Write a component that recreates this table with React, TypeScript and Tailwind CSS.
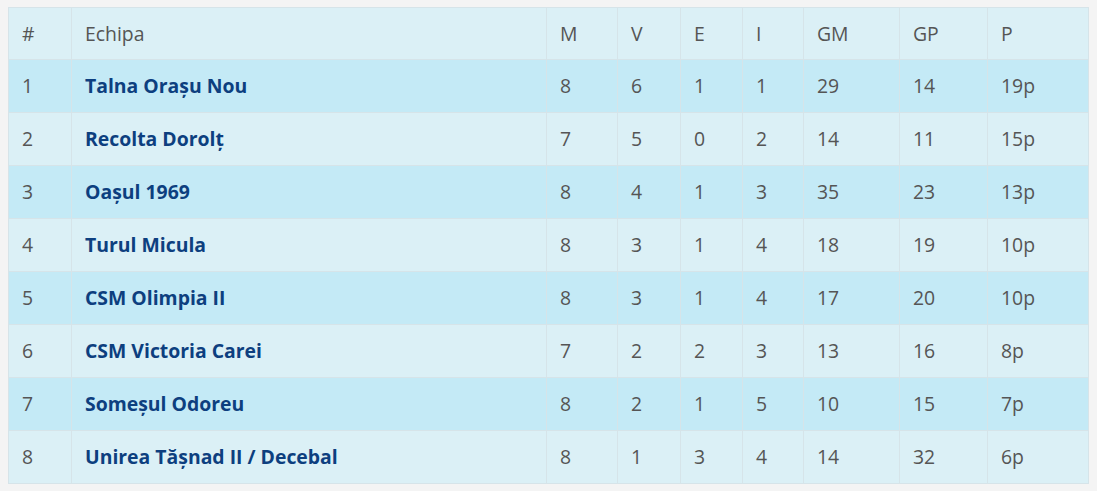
const ROWS: [number, string, number, number, number, number, number, number, string][] = [
  [1, 'Talna Orașu Nou', 8, 6, 1, 1, 29, 14, '19p'],
  [2, 'Recolta Dorolț', 7, 5, 0, 2, 14, 11, '15p'],
  [3, 'Oașul 1969', 8, 4, 1, 3, 35, 23, '13p'],
  [4, 'Turul Micula', 8, 3, 1, 4, 18, 19, '10p'],
  [5, 'CSM Olimpia II', 8, 3, 1, 4, 17, 20, '10p'],
  [6, 'CSM Victoria Carei', 7, 2, 2, 3, 13, 16, '8p'],
  [7, 'Someșul Odoreu', 8, 2, 1, 5, 10, 15, '7p'],
  [8, 'Unirea Tășnad II / Decebal', 8, 1, 3, 4, 14, 32, '6p'],
];

const HEAD = ['#', 'Echipa', 'M', 'V', 'E', 'I', 'GM', 'GP', 'P'];
const WIDTHS = ['w-[63px]', 'w-[475px]', 'w-[71px]', 'w-[63px]', 'w-[62px]', 'w-[61px]', 'w-[96px]', 'w-[88px]', 'w-[101px]'];

export default function App() {
  return (
    <div className="min-h-[491px] bg-[#f4f4f4] pt-[7px] pl-[8px] font-['Open_Sans',sans-serif] text-[19.4px] leading-[26px] text-[#555]">
      <table className="w-[1080px] table-fixed border-collapse border border-[#d6e4e9]">
        <colgroup>
          {WIDTHS.map((w, i) => <col key={i} className={w} />)}
        </colgroup>
        <thead>
          <tr className="h-[52px] bg-[#dbf0f6]">
            {HEAD.map(h => (
              <th key={h} className="border border-[#d6e4e9] px-[13px] text-left font-normal">{h}</th>
            ))}
          </tr>
        </thead>
        <tbody>
          {ROWS.map((r, i) => (
            <tr key={r[0]} className={`h-[53px] ${i % 2 === 0 ? 'bg-[#c4eaf6]' : 'bg-[#dbf0f6]'}`}>
              {r.map((c, j) => (
                <td
                  key={j}
                  className={`border border-[#d6e4e9] px-[13px] ${j === 1 ? 'font-bold text-[#0d3f7f]' : ''}`}
                >
                  {c}
                </td>
              ))}
            </tr>
          ))}
        </tbody>
      </table>
    </div>
  );
}
